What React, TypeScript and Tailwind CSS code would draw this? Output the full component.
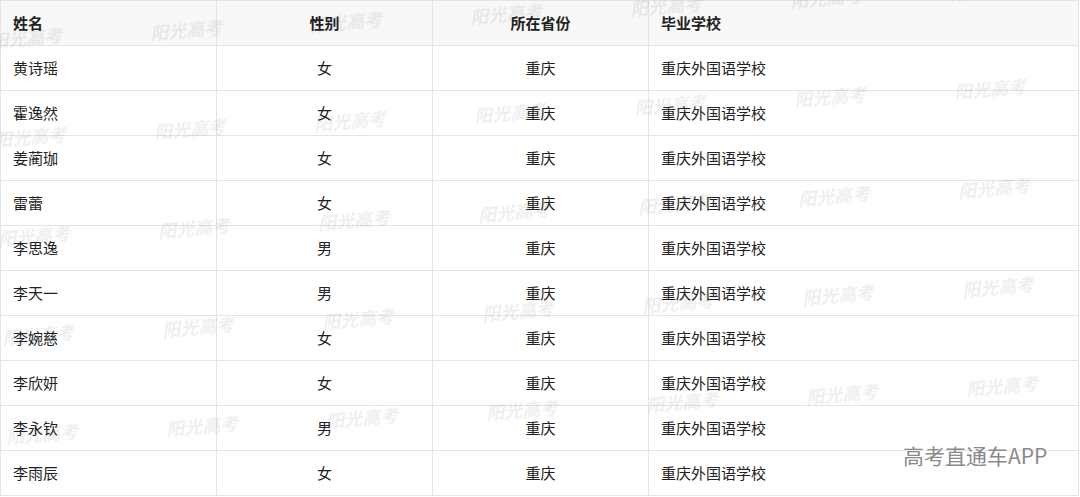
const rows = [
  { name: "黄诗瑶", gender: "女" },
  { name: "霍逸然", gender: "女" },
  { name: "姜蔺珈", gender: "女" },
  { name: "雷蕾", gender: "女" },
  { name: "李思逸", gender: "男" },
  { name: "李天一", gender: "男" },
  { name: "李婉慈", gender: "女" },
  { name: "李欣妍", gender: "女" },
  { name: "李永钦", gender: "男" },
  { name: "李雨辰", gender: "女" },
];

// watermark grid, slightly tilted: each column steps up, each row steps right
const marks: { left: number; top: number }[] = [];
for (let k = 0; k < 5; k++) {
  for (let j = 0; j < 7; j++) {
    marks.push({ left: 160 * j - 10 + 4 * k, top: 28 + 99 * k - 8 * j });
  }
}

export default function App() {
  return (
    <div
      className="relative w-[1080px] h-[497px] overflow-hidden bg-white text-[#222]"
      style={{ fontFamily: '"Noto Sans CJK SC", "Noto Sans", sans-serif' }}
    >
      <table className="w-[1079px] border-collapse table-fixed text-[15px]">
        <colgroup>
          <col className="w-[216px]" />
          <col className="w-[216px]" />
          <col className="w-[216px]" />
          <col />
        </colgroup>
        <thead>
          <tr className="h-[45px] bg-[#f8f8f8]">
            <th className="border border-[#e4e4e4] px-3 text-left font-bold">姓名</th>
            <th className="border border-[#e4e4e4] px-3 text-center font-bold">性别</th>
            <th className="border border-[#e4e4e4] px-3 text-center font-bold">所在省份</th>
            <th className="border border-[#e4e4e4] px-3 text-left font-bold">毕业学校</th>
          </tr>
        </thead>
        <tbody>
          {rows.map((r) => (
            <tr key={r.name} className="h-[45px]">
              <td className="border border-[#e4e4e4] px-3 text-left">{r.name}</td>
              <td className="border border-[#e4e4e4] px-3 text-center">{r.gender}</td>
              <td className="border border-[#e4e4e4] px-3 text-center">重庆</td>
              <td className="border border-[#e4e4e4] px-3 text-left">重庆外国语学校</td>
            </tr>
          ))}
        </tbody>
      </table>

      {/* watermark overlay */}
      <div className="pointer-events-none absolute inset-0">
        {marks.map((m, i) => (
          <span
            key={i}
            className="absolute whitespace-nowrap text-[18px] leading-none font-bold italic text-black/[0.07] -rotate-[5deg] blur-[0.5px]"
            style={{ left: m.left, top: m.top, fontFamily: '"Noto Sans CJK SC", serif' }}
          >
            阳光高考
          </span>
        ))}
      </div>

      <span className="pointer-events-none absolute left-[903px] top-[445px] text-[21px] leading-none text-[#8a8a8a] [text-shadow:0_0_2px_#fff]">
        高考直通车APP
      </span>
    </div>
  );
}
